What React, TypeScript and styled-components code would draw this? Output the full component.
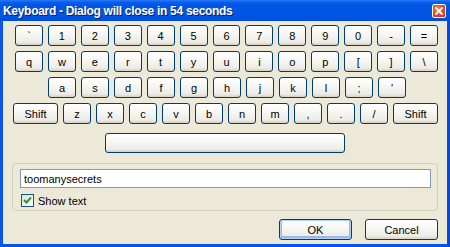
import styled, { createGlobalStyle } from "styled-components";

const GlobalStyle = createGlobalStyle`
  html, body {
    margin: 0;
    padding: 0;
    background: #ffffff;
  }
  * {
    box-sizing: border-box;
  }
`;

const rows: string[][] = [
  ["`", "1", "2", "3", "4", "5", "6", "7", "8", "9", "0", "-", "="],
  ["q", "w", "e", "r", "t", "y", "u", "i", "o", "p", "[", "]", "\\"],
  ["a", "s", "d", "f", "g", "h", "j", "k", "l", ";", "'"],
  ["Shift", "z", "x", "c", "v", "b", "n", "m", ",", ".", "/", "Shift"],
];

const rowIndent = [2, 2, 35, 0];

const App = () => {
  return (
    <>
      <GlobalStyle />
      <Window>
        <TitleBar>
          <Title>Keyboard - Dialog will close in 54 seconds</Title>
          <CloseBtn>
            <svg width="8" height="8" viewBox="0 0 8 8">
              <path d="M1 1 L7 7 M7 1 L1 7" stroke="#fff" strokeWidth="1.8" strokeLinecap="square" />
            </svg>
          </CloseBtn>
        </TitleBar>
        <Body>
          <Keyboard>
            {rows.map((row, i) => (
              <KeyRow key={i} $indent={rowIndent[i]}>
                {row.map((k, j) => (
                  <Key key={j} $w={k === "Shift" ? 45 : 28}>
                    {k}
                  </Key>
                ))}
              </KeyRow>
            ))}
          </Keyboard>
          <SpaceRow>
            <Key $w={240} />
          </SpaceRow>
          <Group>
            <TextInput defaultValue="toomanysecrets" />
            <CheckRow>
              <CheckBox>
                <svg width="9" height="9" viewBox="0 0 9 9">
                  <path d="M1 4 L3.5 6.5 L8 1.5" stroke="#21A121" strokeWidth="2" fill="none" />
                </svg>
              </CheckBox>
              <CheckLabel>Show text</CheckLabel>
            </CheckRow>
          </Group>
          <ButtonRow>
            <DlgButton $default>OK</DlgButton>
            <DlgButton>Cancel</DlgButton>
          </ButtonRow>
        </Body>
      </Window>
    </>
  );
};

const Window = styled.div`
  width: 450px;
  height: 247px;
  display: flex;
  flex-direction: column;
  background: linear-gradient(90deg, #0842d6 0px, #1a5ff0 1px, #0055ea 2px, #0055ea 447px, #0645d8 449px);
`;

const TitleBar = styled.div`
  height: 21px;
  display: flex;
  align-items: center;
  justify-content: space-between;
  padding: 0 4px 0 3px;
  background: linear-gradient(180deg, #2a7cf5 0px, #0a5ff0 2px, #0055e5 5px, #0055e5 17px, #0049d8 21px);
`;

const Title = styled.span`
  color: #ffffff;
  font-family: "Liberation Sans", Arial, sans-serif;
  font-weight: bold;
  font-size: 12px;
  letter-spacing: -0.3px;
  text-shadow: 1px 1px 0 #0a1e6f;
`;

const CloseBtn = styled.div`
  width: 14px;
  height: 14px;
  margin-top: 1px;
  display: flex;
  align-items: center;
  justify-content: center;
  border: 1px solid #ffffff;
  border-radius: 2px;
  background: radial-gradient(circle at 40% 35%, #f08a6a 0%, #e2461f 60%, #c23612 100%);
`;

const Body = styled.div`
  flex: 1;
  margin: 0 3px 3px 3px;
  background: #ece9d8;
  display: flex;
  flex-direction: column;
  padding: 4px 9px 0 10px;
  font-family: "Liberation Sans", Arial, sans-serif;
  font-size: 11px;
  color: #000000;
`;

const Keyboard = styled.div`
  display: flex;
  flex-direction: column;
  gap: 5px;
`;

const KeyRow = styled.div<{ $indent: number }>`
  display: flex;
  gap: 5px;
  padding-left: ${(p) => p.$indent}px;
`;

const Key = styled.button<{ $w: number }>`
  width: ${(p) => p.$w}px;
  height: 21px;
  padding: 0;
  border: 1px solid #003c74;
  border-radius: 3px;
  background: linear-gradient(180deg, #ffffff 0%, #f7f7f4 40%, #ecebe6 85%, #d6d0c5 100%);
  font-family: "Liberation Sans", Arial, sans-serif;
  font-size: 11px;
  color: #000000;
  display: flex;
  align-items: center;
  justify-content: center;
`;

const SpaceRow = styled.div`
  display: flex;
  justify-content: center;
  margin-top: 9px;
  padding-right: 1px;
  ${Key} {
    height: 20px;
  }
`;

const Group = styled.div`
  margin: 10px 0 0 -1px;
  height: 48px;
  border: 1px solid #d0d0bf;
  border-radius: 4px;
  padding: 5px 6px 0 7px;
  display: flex;
  flex-direction: column;
  gap: 6px;
`;

const TextInput = styled.input`
  height: 19px;
  width: 100%;
  border: 1px solid #7f9db9;
  background: #ffffff;
  padding: 0 3px;
  font-family: "Liberation Sans", Arial, sans-serif;
  font-size: 11px;
  color: #000000;
  outline: none;
`;

const CheckRow = styled.div`
  display: flex;
  align-items: center;
  gap: 4px;
  padding-left: 1px;
`;

const CheckBox = styled.div`
  width: 13px;
  height: 13px;
  border: 1px solid #1c5180;
  background: linear-gradient(135deg, #dcdcd7 0%, #ffffff 100%);
  display: flex;
  align-items: center;
  justify-content: center;
`;

const CheckLabel = styled.span`
  font-size: 11px;
`;

const ButtonRow = styled.div`
  display: flex;
  justify-content: flex-end;
  gap: 13px;
  margin-top: 8px;
`;

const DlgButton = styled.button<{ $default?: boolean }>`
  width: 73px;
  height: 21px;
  padding: 0;
  border: 1px solid #003c74;
  border-radius: 3px;
  background: linear-gradient(180deg, #ffffff 0%, #f7f7f4 40%, #ecebe6 85%, #d6d0c5 100%);
  box-shadow: ${(p) =>
    p.$default ? "inset 0 0 0 1px #b7d0f6, inset 0 -1px 0 2px #98b8ea" : "none"};
  font-family: "Liberation Sans", Arial, sans-serif;
  font-size: 11px;
  color: #000000;
`;

export default App;
